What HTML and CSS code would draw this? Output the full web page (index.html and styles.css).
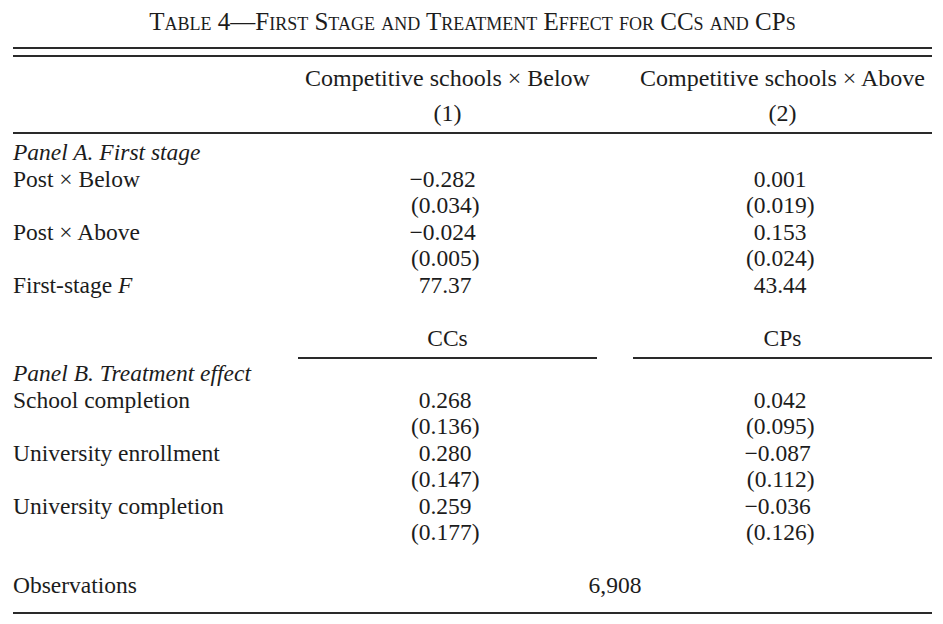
FILE: index.html
```html
<!DOCTYPE html>
<html>
<head>
<meta charset="utf-8">
<link rel="stylesheet" href="styles.css">
</head>
<body>
<div class="page">
  <div class="title">Table 4—First Stage and Treatment Effect for CCs and CPs</div>
  <div class="rule double-top"></div>
  <div class="rule double-bottom"></div>

  <div class="row head head1">
    <div></div>
    <div class="c">Competitive schools × Below</div>
    <div></div>
    <div class="c">Competitive schools × Above</div>
  </div>
  <div class="row head head2">
    <div></div>
    <div class="c">(1)</div>
    <div></div>
    <div class="c">(2)</div>
  </div>
  <div class="rule mid"></div>

  <div class="row panel-a"><div class="lab"><i>Panel A. First stage</i></div></div>
  <div class="row"><div class="lab">Post × Below</div><div class="c"><span class="num np">−0.282</span></div><div></div><div class="c"><span class="num np">0.001</span></div></div>
  <div class="row"><div class="lab"></div><div class="c"><span class="num">(0.034)</span></div><div></div><div class="c"><span class="num">(0.019)</span></div></div>
  <div class="row"><div class="lab">Post × Above</div><div class="c"><span class="num np">−0.024</span></div><div></div><div class="c"><span class="num np">0.153</span></div></div>
  <div class="row"><div class="lab"></div><div class="c"><span class="num">(0.005)</span></div><div></div><div class="c"><span class="num">(0.024)</span></div></div>
  <div class="row"><div class="lab">First-stage <i>F</i></div><div class="c"><span class="num np">77.37</span></div><div></div><div class="c"><span class="num np">43.44</span></div></div>
  <div class="row blank"></div>
  <div class="row sub"><div></div><div class="c ul">CCs</div><div></div><div class="c ul">CPs</div></div>

  <div class="row panel-b"><div class="lab"><i>Panel B. Treatment effect</i></div></div>
  <div class="row"><div class="lab">School completion</div><div class="c"><span class="num np">0.268</span></div><div></div><div class="c"><span class="num np">0.042</span></div></div>
  <div class="row"><div class="lab"></div><div class="c"><span class="num">(0.136)</span></div><div></div><div class="c"><span class="num">(0.095)</span></div></div>
  <div class="row"><div class="lab">University enrollment</div><div class="c"><span class="num np">0.280</span></div><div></div><div class="c"><span class="num np">−0.087</span></div></div>
  <div class="row"><div class="lab"></div><div class="c"><span class="num">(0.147)</span></div><div></div><div class="c"><span class="num">(0.112)</span></div></div>
  <div class="row"><div class="lab">University completion</div><div class="c"><span class="num np">0.259</span></div><div></div><div class="c"><span class="num np">−0.036</span></div></div>
  <div class="row"><div class="lab"></div><div class="c"><span class="num">(0.177)</span></div><div></div><div class="c"><span class="num">(0.126)</span></div></div>
  <div class="row blank"></div>
  <div class="row obs"><div class="lab">Observations</div><div class="span">6,908</div></div>
  <div class="rule bottom"></div>
</div>
</body>
</html>
```
FILE: styles.css
```css
html, body {
  margin: 0;
  padding: 0;
  background: #ffffff;
}
body {
  font-family: "Liberation Serif", "Times New Roman", serif;
  font-size: 23.5px;
  color: #1c1c1c;
}
.page {
  width: 919px;
  padding: 9px 11px 0 13px;
}
.title {
  text-align: center;
  font-variant: small-caps;
  line-height: 26px;
  font-size: 25px;
  height: 26px;
}
.rule {
  height: 0;
  border-top: 2px solid #2a2a2a;
}
.double-top { margin-top: 12px; }
.double-bottom { margin-top: 6px; }
.row {
  display: grid;
  grid-template-columns: 285px 299px 36px 299px;
  line-height: 26.5px;
  height: 26.5px;
}
.row .c { text-align: center; }
.head { font-size: 24px; }
.head1 { margin-top: 8px; line-height: 26px; height: 26px; }
.head2 { margin-top: 9px; line-height: 26px; height: 26px; }
.mid { margin-top: 6px; }
.panel-a { margin-top: 5px; }
.lab { white-space: nowrap; }
.num {
  display: inline-block;
  width: 70px;
  text-align: right;
  transform: translateX(-3px);
}
.num.np { padding-right: 8px; box-sizing: border-box; }
.sub .ul {
  border-bottom: 2px solid #2a2a2a;
  height: 32px;
}
.panel-b { margin-top: 9px; }
.obs .span {
  grid-column: 2 / 5;
  text-align: center;
}
.bottom { margin-top: 13px; }
```
